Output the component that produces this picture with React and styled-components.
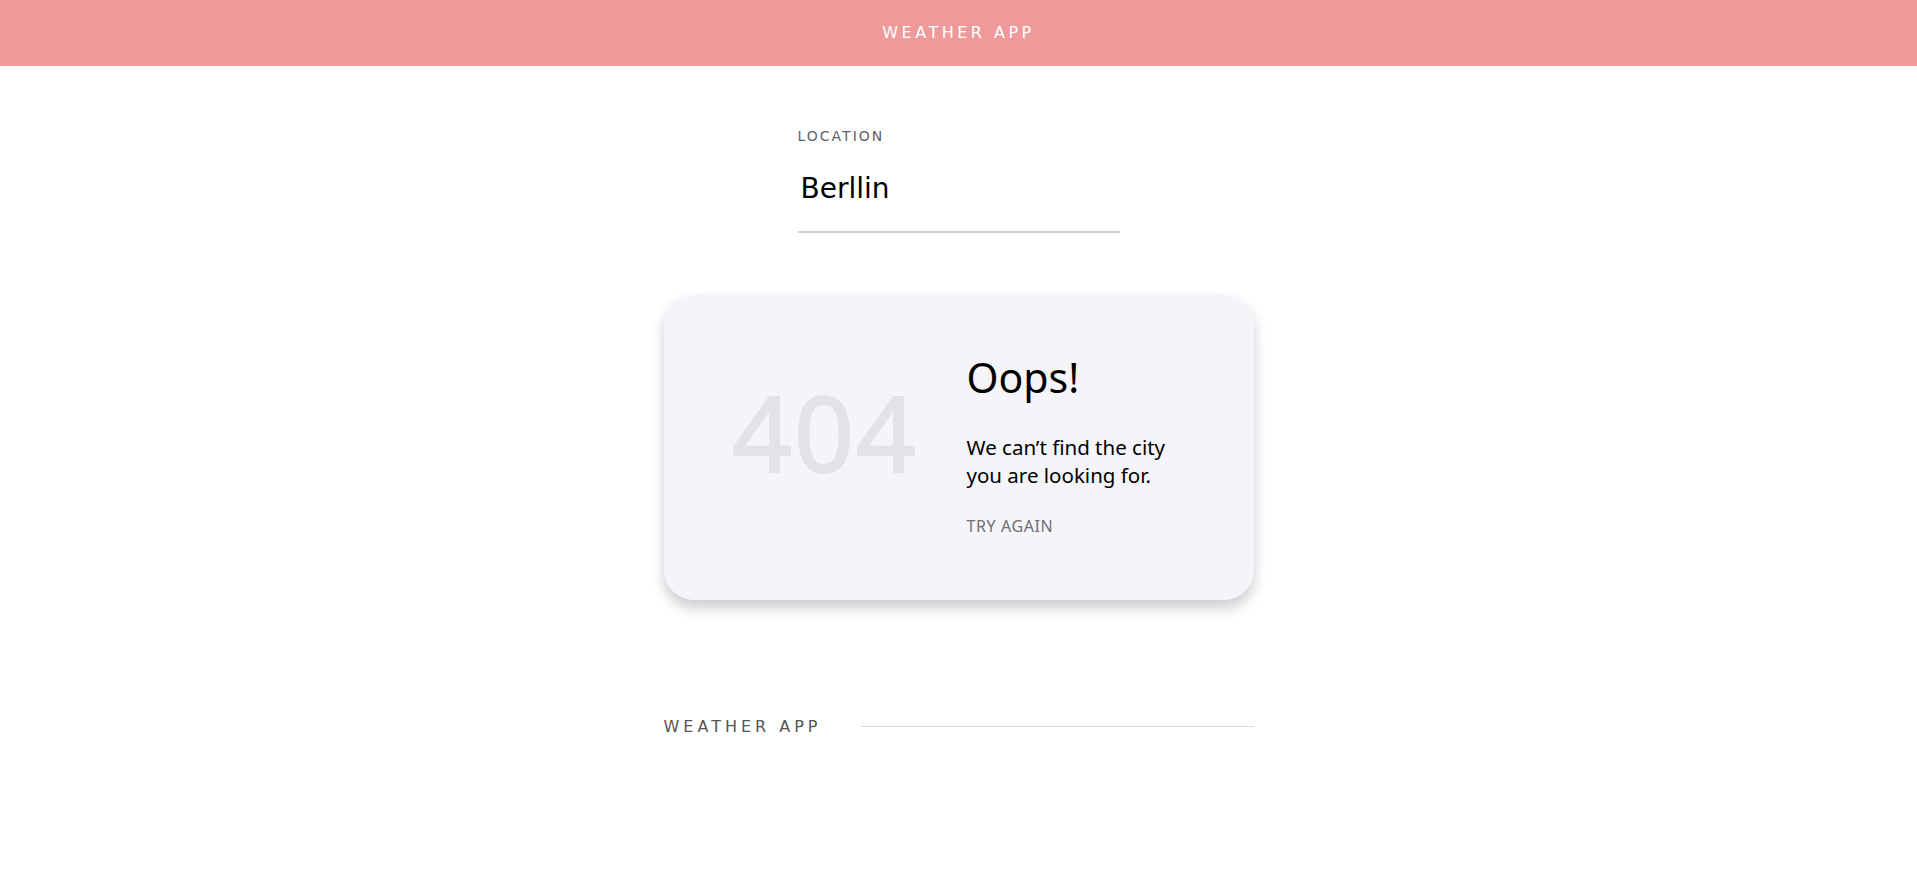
import React from 'react';
import styled, { createGlobalStyle } from 'styled-components';

const GlobalStyle = createGlobalStyle`
  * { box-sizing: border-box; }
  body {
    margin: 0;
    background: #fff;
    font-family: "Noto Sans", "DejaVu Sans", sans-serif;
    color: #000;
  }
`;

const Header = styled.header`
  height: 66px;
  background: #ef9a9a;
  display: flex;
  align-items: center;
  justify-content: center;
`;

const HeaderTitle = styled.h1`
  margin: 0 0 2px;
  color: #fff;
  font-family: "DejaVu Sans", sans-serif;
  font-size: 16px;
  font-weight: 400;
  letter-spacing: 3.5px;
`;

const Main = styled.main`
  display: flex;
  flex-direction: column;
  align-items: center;
  padding-top: 62px;
`;

const Field = styled.label`
  width: 322px;
  display: flex;
  flex-direction: column;
`;

const FieldLabel = styled.span`
  font-family: "DejaVu Sans", sans-serif;
  font-size: 14px;
  letter-spacing: 2px;
  color: #5f6368;
`;

const Input = styled.input`
  margin-top: 28px;
  border: none;
  border-bottom: 2px solid #d0d0d0;
  outline: none;
  background: transparent;
  font-family: "DejaVu Sans", sans-serif;
  font-size: 28px;
  color: #000;
  padding: 0 3px 26px;
`;

const Card = styled.section`
  margin-top: 62px;
  width: 590px;
  height: 305px;
  background: #f5f5f9;
  border-radius: 30px;
  box-shadow: 0 8px 14px rgba(0, 0, 0, 0.2);
  display: grid;
  grid-template-columns: 303px 1fr;
  align-items: center;
`;

const Code = styled.div`
  padding-left: 20px;
  padding-bottom: 32px;
  text-align: center;
  font-family: "Noto Sans", sans-serif;
  font-size: 105px;
  font-weight: 400;
  letter-spacing: 2px;
  line-height: 1;
  color: #e3e3e7;
  -webkit-text-stroke: 2px #e3e3e7;
`;

const Message = styled.div`
  display: flex;
  flex-direction: column;
  align-items: flex-start;
  padding-bottom: 6px;
`;

const Title = styled.h2`
  margin: 0;
  font-size: 41px;
  font-weight: 400;
  line-height: 48px;
`;

const Text = styled.p`
  margin: 32px 0 0;
  font-size: 20.5px;
  line-height: 28px;
  max-width: 212px;
`;

const Retry = styled.button`
  margin-top: 26px;
  padding: 0;
  border: none;
  background: none;
  font-family: inherit;
  font-size: 16px;
  letter-spacing: 0.6px;
  color: #6f6f73;
  cursor: pointer;
`;

const Footer = styled.footer`
  margin-top: 117px;
  width: 590px;
  display: flex;
  align-items: center;
  gap: 39px;
`;

const FooterTitle = styled.span`
  font-family: "DejaVu Sans", sans-serif;
  font-size: 16px;
  letter-spacing: 4px;
  color: #555;
`;

const Rule = styled.div`
  flex: 1;
  height: 1px;
  background: #d8d8d8;
`;

export default function App() {
  return (
    <>
      <GlobalStyle />
      <Header>
        <HeaderTitle>WEATHER APP</HeaderTitle>
      </Header>
      <Main>
        <Field>
          <FieldLabel>LOCATION</FieldLabel>
          <Input defaultValue="Berllin" />
        </Field>
        <Card>
          <Code>404</Code>
          <Message>
            <Title>Oops!</Title>
            <Text>We can’t find the city you are looking for.</Text>
            <Retry>TRY AGAIN</Retry>
          </Message>
        </Card>
        <Footer>
          <FooterTitle>WEATHER APP</FooterTitle>
          <Rule />
        </Footer>
      </Main>
    </>
  );
}
